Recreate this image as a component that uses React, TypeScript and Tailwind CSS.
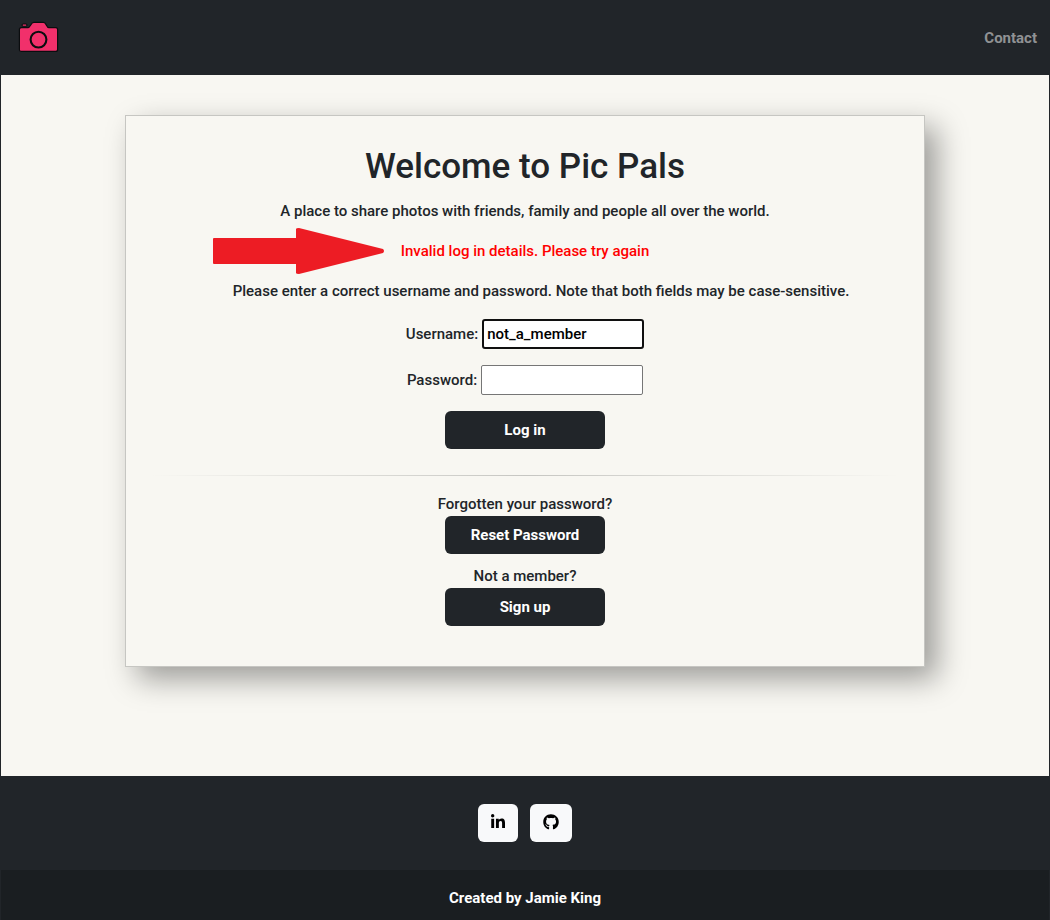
import React from "react";
import { FaGithub, FaLinkedinIn } from "react-icons/fa";

function CameraLogo() {
  return (
    <svg
      viewBox="0 1 42 34"
      className="h-[34px] w-[42px]"
      fill="#f1306b"
      stroke="#0b0d0f"
      strokeLinejoin="round"
      aria-hidden="true"
    >
      <rect x="4" y="4" width="5" height="2.2" rx="1.1" strokeWidth="1.1" />
      <path
        d="M3.6 7.7H9.8C12.6 7.7 12.6 2.4 15.8 2.4H25.4C28.6 2.4 28.2 7.7 31 7.7H37.6C39 7.7 39.6 8.4 39.6 9.6V29.4C39.6 30.8 38.8 31.4 37.6 31.4H3.4C2.1 31.4 1.4 30.7 1.4 29.4V9.6C1.4 8.4 2.2 7.7 3.6 7.7Z"
        strokeWidth="1.2"
      />
      <circle cx="20.5" cy="19.6" r="7.9" strokeWidth="2.1" />
    </svg>
  );
}

function ErrorArrow() {
  return (
    <svg
      viewBox="0 0 172 46"
      className="absolute top-1/2 right-full mr-4 h-[46px] w-[172px] -translate-y-1/2"
      fill="#ed1c24"
      aria-hidden="true"
    >
      <path d="M1 10H83V1Q83 0 86 0L170 21Q172 23 170 25L86 46Q83 46 83 45V36H1Q0 36 0 35V11Q0 10 1 10Z" />
    </svg>
  );
}

const darkButton =
  "flex h-[38px] w-40 items-center justify-center rounded-md bg-[#212529] font-bold text-white";

export default function App() {
  return (
    <div className="flex min-h-screen flex-col border-x border-[#212529] bg-[#f8f7f2] font-['Roboto',sans-serif] text-[15px] leading-6 font-medium text-[#212529]">
      <header className="flex h-[75px] items-center justify-between bg-[#212529] pr-3 pl-[17px]">
        <a href="#" aria-label="Pic Pals home">
          <CameraLogo />
        </a>
        <nav>
          <a href="#contact" className="font-bold text-[#909294]">
            Contact
          </a>
        </nav>
      </header>

      <main className="flex grow flex-col items-center px-4 py-10">
        <section className="flex w-full max-w-[800px] flex-col items-center border border-[#c6c6c2] bg-[#f8f7f2] px-6 pt-[27px] pb-10 shadow-[12px_12px_28px_rgba(0,0,0,0.37)]">
          <h1 className="mb-2 text-[35px] leading-[48px] font-medium">Welcome to Pic Pals</h1>
          <p className="mb-4">
            A place to share photos with friends, family and people all over the world.
          </p>
          <p className="relative mb-4 text-[#ff0000]">
            <ErrorArrow />
            Invalid log in details. Please try again
          </p>
          <form className="flex w-full flex-col items-center gap-4" onSubmit={(e) => e.preventDefault()}>
            <ul className="pl-8">
              <li>
                Please enter a correct username and password. Note that both fields may be
                case-sensitive.
              </li>
            </ul>
            <div className="flex items-center gap-1">
              <label htmlFor="username">Username:</label>
              <input
                id="username"
                type="text"
                defaultValue="not_a_member"
                className="h-[30px] w-[162px] rounded-[3px] border-2 border-[#101010] bg-white px-[3px] text-black outline-none"
              />
            </div>
            <div className="flex items-center gap-1">
              <label htmlFor="password">Password:</label>
              <input
                id="password"
                type="password"
                className="h-[30px] w-[162px] rounded-[2px] border border-[#767676] bg-white px-1 text-black"
              />
            </div>
            <button type="submit" className={darkButton}>
              Log in
            </button>
          </form>
          <hr className="mt-[26px] mb-4 h-px w-full border-0 bg-linear-to-r from-transparent via-[#c6c6c2] to-transparent" />
          <p>Forgotten your password?</p>
          <a href="#reset" className={darkButton}>
            Reset Password
          </a>
          <p className="mt-[10px]">Not a member?</p>
          <a href="#signup" className={darkButton}>
            Sign up
          </a>
        </section>
      </main>

      <footer className="bg-[#212529] text-center">
        <div className="flex h-[94px] items-center justify-center gap-3">
          <a
            href="#linkedin"
            aria-label="LinkedIn"
            className="flex h-[38px] w-10 items-center justify-center rounded-md bg-[#f8f9fa] pb-0.5 text-black"
          >
            <FaLinkedinIn size={16} />
          </a>
          <a
            href="#github"
            aria-label="GitHub"
            className="flex h-[38px] w-[42px] items-center justify-center rounded-md bg-[#f8f9fa] pb-0.5 text-black"
          >
            <FaGithub size={16} />
          </a>
        </div>
        <p className="bg-[#1a1e21] pt-4 pb-[10px] font-bold text-white">Created by Jamie King</p>
      </footer>
    </div>
  );
}
